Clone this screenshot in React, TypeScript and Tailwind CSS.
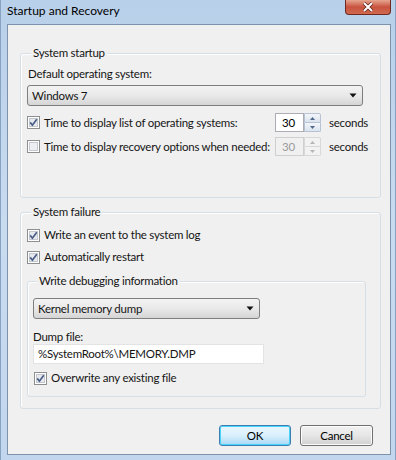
const Check = ({ checked }: { checked: boolean }) => (
  <svg width="13" height="13" viewBox="0 0 13 13" className="shrink-0">
    <rect x="0.5" y="0.5" width="12" height="12" fill="#ffffff" stroke="#8e8f8f" />
    <rect x="2.5" y="2.5" width="8" height="8" fill={checked ? '#e6e9ee' : '#eceef1'} stroke="#c5c9cf" />
    {checked && <path d="M3.2 6.4 L5.4 9.2 L9.8 3.2" fill="none" stroke="#4a5d86" strokeWidth="1.7" />}
  </svg>
);

const Arrow = () => (
  <svg width="8" height="5" viewBox="0 0 8 5">
    <path d="M0.5 0.5 H7.5 L4 4.5 Z" fill="#111" />
  </svg>
);

const Combo = ({ value, w }: { value: string; w: string }) => (
  <div
    className={`${w} h-[21px] flex items-center justify-between rounded-[3px] border border-[#7e7e7e] bg-gradient-to-b from-[#f3f3f3] via-[#e9e9e9] to-[#d5d5d5] pl-[4px] pr-[5px]`}
  >
    <span>{value}</span>
    <Arrow />
  </div>
);

const Spinner = ({ disabled }: { disabled?: boolean }) => (
  <div className="flex h-[19px]">
    <div
      className={`w-[29px] h-full flex items-center pl-[6px] border ${
        disabled ? 'border-[#cfcfcf] bg-[#f0f0f0] text-[#9a9a9a]' : 'border-[#abadb3] bg-white text-black'
      }`}
    >
      30
    </div>
    <div className="w-[17px] h-full flex flex-col">
      {[0, 1].map((i) => (
        <div
          key={i}
          className={`flex-1 flex items-center justify-center border ${
            disabled ? 'border-[#d8d8d8] bg-[#f2f2f2]' : 'border-[#b7c3d3] bg-gradient-to-b from-[#f4f7fb] to-[#dae3ee]'
          } ${i === 0 ? 'rounded-tr-[2px]' : 'rounded-br-[2px] border-t-0'}`}
        >
          <svg width="5" height="3" viewBox="0 0 5 3">
            <path d={i === 0 ? 'M0 3 L2.5 0 L5 3 Z' : 'M0 0 L5 0 L2.5 3 Z'} fill={disabled ? '#b5b5b5' : '#51678c'} />
          </svg>
        </div>
      ))}
    </div>
  </div>
);

const Group = ({ label, className, children }: { label: string; className: string; children: React.ReactNode }) => (
  <div className={`border border-[#d5dfe5] rounded-[3px] shadow-[inset_1px_1px_0_#ffffff] ${className}`}>
    <div className="-mt-[9px] ml-[4px] w-fit px-[2px] bg-[#f0f0f0] leading-[16px]">{label}</div>
    {children}
  </div>
);

export default function App() {
  return (
    <div className="w-[396px] h-[460px] flex flex-col whitespace-nowrap bg-gradient-to-b from-[#b9d0ea] via-[#c9dbef] to-[#c2d6ee] border-l border-r border-[#8aa2c1] text-[11.5px] tracking-[-0.25px] leading-[16px] text-[#151515] font-['Lato',sans-serif]">
      <div className="h-[24px] flex justify-between items-start">
        <div className="pl-[6px] pt-[3px] text-[12px] tracking-normal text-black">Startup and Recovery</div>
        <div className="mr-[4px] w-[46px] h-[15px] rounded-b-[4px] border border-t-0 border-[#6e2a22] bg-gradient-to-b from-[#e6a58f] via-[#c8523f] to-[#d06b4f] flex items-center justify-center">
          <svg width="12" height="10" viewBox="0 0 12 10">
            <path d="M2 1 L10 9 M10 1 L2 9" stroke="#5a1f18" strokeWidth="3.4" />
            <path d="M2 1 L10 9 M10 1 L2 9" stroke="#ffffff" strokeWidth="2" />
          </svg>
        </div>
      </div>
      <div className="ml-[6px] mr-[4px] h-[431px] border border-[#7d92ad] bg-[#f0f0f0] flex flex-col">
        <Group label="System startup" className="mt-[28px] ml-[12px] w-[361px] h-[145px] pl-[6px]">
          <div className="mt-[5px] pl-[1px]">Default operating system:</div>
          <div className="mt-[3px]">
            <Combo value="Windows 7" w="w-[336px]" />
          </div>
          <div className="mt-[7px] flex items-center h-[19px]">
            <div className="w-[248px] flex items-center gap-[4px]">
              <Check checked />
              <span>Time to display list of operating systems:</span>
            </div>
            <Spinner />
            <span className="ml-[8px]">seconds</span>
          </div>
          <div className="mt-[5px] flex items-center h-[19px]">
            <div className="w-[248px] flex items-center gap-[4px]">
              <Check checked={false} />
              <span>Time to display recovery options when needed:</span>
            </div>
            <Spinner disabled />
            <span className="ml-[8px]">seconds</span>
          </div>
        </Group>

        <Group label="System failure" className="mt-[14px] ml-[12px] w-[361px] h-[197px] pl-[6px]">
          <div className="mt-[7px] flex items-center gap-[4px]">
            <Check checked />
            <span>Write an event to the system log</span>
          </div>
          <div className="mt-[6px] flex items-center gap-[4px]">
            <Check checked />
            <span>Automatically restart</span>
          </div>
          <Group label="Write debugging information" className="mt-[16px] w-[339px] h-[116px] pl-[5px]">
            <div className="mt-[9px]">
              <Combo value="Kernel memory dump" w="w-[227px]" />
            </div>
            <div className="mt-[10px] leading-[15px]">Dump file:</div>
            <div className="w-[231px] h-[20px] border border-[#e3e3e3] bg-white flex items-center pl-[4px]">
              %SystemRoot%\MEMORY.DMP
            </div>
            <div className="mt-[6px] ml-[1px] flex items-center gap-[4px]">
              <Check checked />
              <span>Overwrite any existing file</span>
            </div>
          </Group>
        </Group>

        <div className="mt-[16px] mr-[17px] flex justify-end gap-[9px]">
          <button className="w-[72px] h-[21px] rounded-[3px] border border-[#3c7fb1] shadow-[inset_0_0_0_1px_#48d3fb] bg-gradient-to-b from-[#eaf6fd] via-[#d9f0fc] to-[#a7d9f5] text-black">
            OK
          </button>
          <button className="w-[73px] h-[21px] rounded-[3px] border border-[#707070] shadow-[inset_0_0_0_1px_#fcfcfc] bg-gradient-to-b from-[#f2f2f2] via-[#e6e6e6] to-[#d0d0d0] text-black">
            Cancel
          </button>
        </div>
      </div>
    </div>
  );
}
